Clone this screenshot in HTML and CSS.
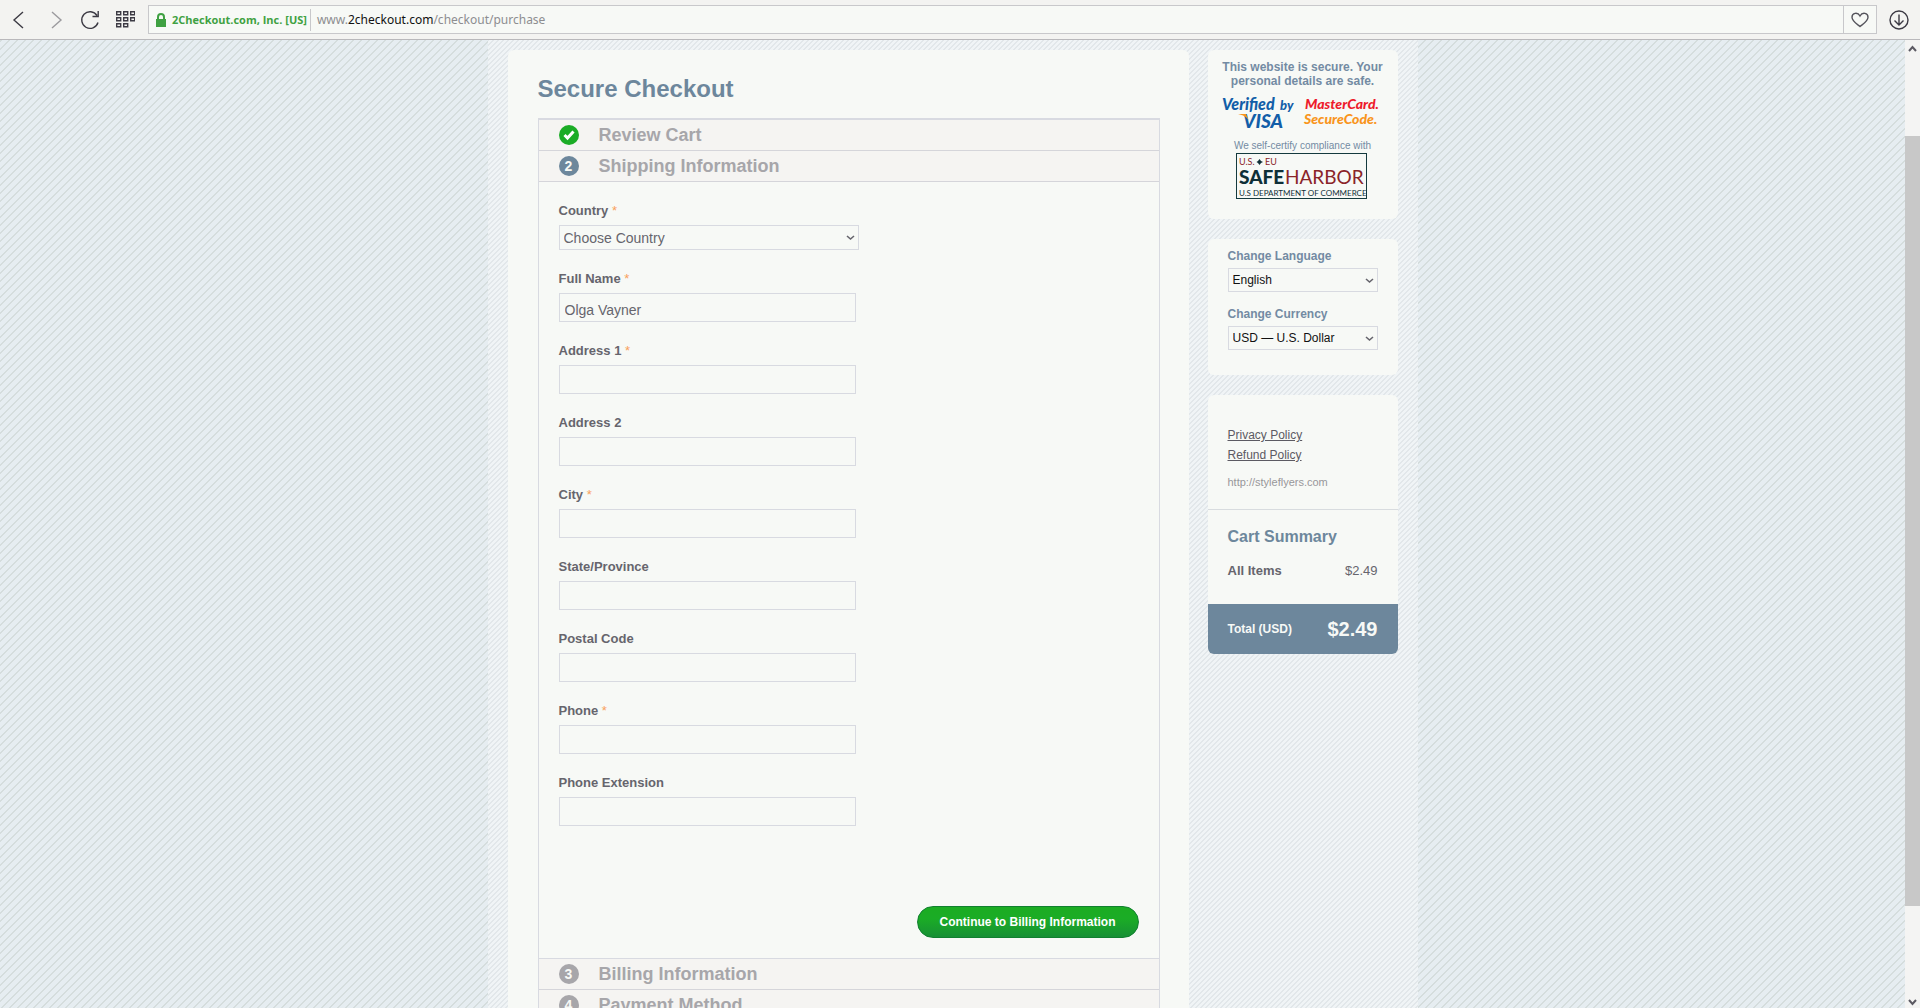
FILE: index.html
```html
<!DOCTYPE html>
<html lang="en">
<head>
  <meta charset="UTF-8" />
  <meta name="viewport" content="width=device-width, initial-scale=1.0" />
  <title>Secure Checkout</title>
  <link rel="stylesheet" href="styles.css">
</head>
<body>
  <header class="browser-bar">
    <button type="button" class="nav-btn" aria-label="Back">
      <svg width="20" height="24" viewBox="0 0 20 24"><path d="M13 4 L4 12 L13 20" /></svg>
    </button>
    <button type="button" class="nav-btn nav-off" aria-label="Forward">
      <svg width="20" height="24" viewBox="0 0 20 24"><path d="M7 4 L16 12 L7 20" /></svg>
    </button>
    <button type="button" class="nav-btn" aria-label="Reload">
      <svg width="20" height="24" viewBox="0 0 20 24"><path d="M17 7.500A8.300 8.300 0 1 0 18 14.500M18.200 3V8.500H12.500" /></svg>
    </button>
    <button type="button" class="nav-btn" aria-label="Speed dial">
      <svg width="20" height="24" viewBox="0 0 20 24"><path d="M1.700 3.700h4v3h-4zM8.700 3.700h4v3h-4zM15.700 3.700h4v3h-4zM1.700 9.700h4v3h-4zM8.700 9.700h4v3h-4zM15.700 9.700h4v3h-4zM1.700 15.700h4v3h-4zM8.700 15.700h4v3h-4z" /></svg>
    </button>
    <div class="address">
      <svg class="lock" width="10" height="14" viewBox="0 0 10 14"><path d="M0 6h10v8H0z" /><path class="shackle" d="M2 7V4a3 3 0 0 1 6 0v3" /></svg>
      <span class="cert">2Checkout.com, Inc. [US]</span>
      <span class="url">www.<b>2checkout.com</b>/checkout/purchase</span>
      <button type="button" class="heart" aria-label="Bookmark">
        <svg width="18" height="16" viewBox="0 0 18 16"><path d="M9 14.500C6 12 1 9 1 5.200C1 1 6.500-.5 9 4C11.500-.5 17 1 17 5.200C17 9 12 12 9 14.500z" /></svg>
      </button>
    </div>
    <button type="button" class="nav-btn" aria-label="Downloads">
      <svg width="20" height="20" viewBox="0 0 20 20"><circle cx="10" cy="10" r="9" /><path d="M10 4.500V15M5.500 10.500L10 15L14.500 10.500" /></svg>
    </button>
  </header>

  <div class="viewport">
    <div class="page">
      <div class="wrapper">
        <main class="panel checkout">
          <h1>Secure Checkout</h1>
          <div class="steps">
            <h2 class="step">
              <span class="num done"><svg width="14" height="12" viewBox="0 0 14 12"><path d="M2.500 6L5.500 9L11.500 2.500" /></svg></span>
              Review Cart
            </h2>
            <h2 class="step"><span class="num active">2</span>Shipping Information</h2>
            <form class="shipping">
              <div class="field">
                <label for="country">Country <span class="req">*</span></label>
                <div class="select wide">
                  <select id="country"><option>Choose Country</option></select>
                  <svg width="9" height="6" viewBox="0 0 9 6"><path d="M1 1L4.500 4L8 1" /></svg>
                </div>
              </div>
              <div class="field">
                <label for="name">Full Name <span class="req">*</span></label>
                <input type="text" id="name" value="Olga Vayner" />
              </div>
              <div class="field">
                <label for="address1">Address 1 <span class="req">*</span></label>
                <input type="text" id="address1" />
              </div>
              <div class="field">
                <label for="address2">Address 2</label>
                <input type="text" id="address2" />
              </div>
              <div class="field">
                <label for="city">City <span class="req">*</span></label>
                <input type="text" id="city" />
              </div>
              <div class="field">
                <label for="state">State/Province</label>
                <input type="text" id="state" />
              </div>
              <div class="field">
                <label for="postal">Postal Code</label>
                <input type="text" id="postal" />
              </div>
              <div class="field">
                <label for="phone">Phone <span class="req">*</span></label>
                <input type="text" id="phone" />
              </div>
              <div class="field">
                <label for="ext">Phone Extension</label>
                <input type="text" id="ext" />
              </div>
              <button type="submit" class="continue">Continue to Billing Information</button>
            </form>
            <h2 class="step"><span class="num">3</span>Billing Information</h2>
            <h2 class="step"><span class="num">4</span>Payment Method</h2>
          </div>
        </main>

        <aside class="sidebar">
          <section class="panel secure">
            <p class="safe">This website is secure. Your personal details are safe.</p>
            <svg class="logos" width="166" height="36" viewBox="0 0 166 36">
              <g class="visa">
                <text x="0" y="13" font-size="16">Verified</text>
                <text x="58" y="13" font-size="13">by</text>
                <text x="21" y="31" font-size="19">VISA</text>
              </g>
              <path class="flick" d="M16 17h8l3 7c-2-4-6-6-11-7z" />
              <text class="mc" x="83" y="12" font-size="14">MasterCard.</text>
              <text class="sc" x="82" y="27" font-size="14">SecureCode.</text>
            </svg>
            <p class="certify">We self-certify compliance with</p>
            <svg class="harbor" width="131" height="46" viewBox="0 0 131 46">
              <rect x=".5" y=".5" width="130" height="45" />
              <text class="red" x="3" y="12" font-size="9">U.S.</text>
              <path class="dark" d="M23.500 6L25 8L27 9L25 10L23.500 12L22 10L20.500 9L22 8z" />
              <text class="red" x="29" y="12" font-size="9">EU</text>
              <text class="dark bold" x="3" y="31" font-size="19">SAFE</text>
              <text class="red" x="49" y="31" font-size="19">HARBOR</text>
              <text class="dark" x="3" y="43" font-size="8">U.S DEPARTMENT OF COMMERCE</text>
            </svg>
          </section>

          <section class="panel prefs">
            <label for="language">Change Language</label>
            <div class="select">
              <select id="language"><option>English</option></select>
              <svg width="9" height="6" viewBox="0 0 9 6"><path d="M1 1L4.500 4L8 1" /></svg>
            </div>
            <label for="currency">Change Currency</label>
            <div class="select">
              <select id="currency"><option>USD — U.S. Dollar</option></select>
              <svg width="9" height="6" viewBox="0 0 9 6"><path d="M1 1L4.500 4L8 1" /></svg>
            </div>
          </section>

          <section class="panel cart">
            <div class="policies">
              <a href="#">Privacy Policy</a>
              <a href="#">Refund Policy</a>
              <p>http://styleflyers.com</p>
            </div>
            <div class="summary">
              <h3>Cart Summary</h3>
              <div class="line"><b>All Items</b><span>$2.49</span></div>
            </div>
            <div class="total"><span>Total (USD)</span><strong>$2.49</strong></div>
          </section>
        </aside>
      </div>
    </div>

    <div class="scrollbar">
      <svg width="9" height="8" viewBox="0 0 9 8"><path d="M1 6L4.500 2L8 6" /></svg>
      <div class="track"><div class="thumb"></div></div>
      <svg width="9" height="8" viewBox="0 0 9 8"><path d="M1 2L4.500 6L8 2" /></svg>
    </div>
  </div>
</body>
</html>
```
FILE: styles.css
```css
* { box-sizing: border-box; }
body {
  margin: 0;
  height: 100vh;
  display: flex;
  flex-direction: column;
  overflow: hidden;
  font-family: "Liberation Sans", Arial, sans-serif;
  font-size: 13px;
  color: #66656d;
}
h1, h2, h3, p { margin: 0; }
button, input, select { font-family: inherit; }
svg { display: block; }

/* browser bar */
.browser-bar {
  flex: none;
  height: 40px;
  padding: 0 11px 0 10px;
  display: flex;
  align-items: center;
  gap: 15px;
  background: #f3f3f1;
  border-bottom: 1px solid #b9b8bb;
}
.nav-btn {
  padding: 0;
  border: 0;
  background: none;
}
.nav-btn svg {
  fill: none;
  stroke: #3c3a44;
  stroke-width: 1.4;
}
.nav-off svg { stroke: #9b9a9e; }
.address {
  flex: 1;
  height: 29px;
  margin: 0 -3px 0 -2px;
  padding-left: 7px;
  display: flex;
  align-items: center;
  background: #f7f9f6;
  border: 1px solid #c8c8cb;
  font-family: "Noto Sans", sans-serif;
  font-size: 12px;
}
.lock { fill: #3fa142; margin-right: 6px; }
.lock .shackle { fill: none; stroke: #3fa142; stroke-width: 2; }
.cert {
  padding-right: 3px;
  border-right: 1px solid #c8c8cb;
  font-family: "Open Sans", sans-serif;
  font-size: 11px;
  font-weight: bold;
  line-height: 22px;
  color: #3fa142;
}
.url { flex: 1; padding-left: 6px; color: #8d8d90; }
.url b { font-weight: normal; color: #111; }
.heart {
  align-self: stretch;
  width: 33px;
  padding: 0 0 0 7px;
  border: 0;
  border-left: 1px solid #c8c8cb;
  background: #f7f9f6;
}
.heart svg { fill: none; stroke: #55545c; stroke-width: 1.4; }

/* page background */
.viewport { flex: 1; min-height: 0; display: flex; }
.page {
  flex: 1;
  overflow: hidden;
  background: linear-gradient(135deg, #d5dddd 0 14%, #e6edf1 14% 50%, #d5dddd 50% 64%, #e6edf1 64%);
  background-size: 8px 8px;
}
.wrapper {
  width: 930px;
  min-height: 100%;
  margin: 0 auto;
  padding: 10px 20px 0;
  display: flex;
  align-items: flex-start;
  gap: 19px;
  background: linear-gradient(135deg, #e2e7ea 0 12%, #f0f4f6 12% 50%, #e2e7ea 50% 62%, #f0f4f6 62%);
  background-size: 5px 5px;
}
.panel { background: #f7f9f6; border-radius: 6px; }

/* checkout */
.checkout { flex: 1; padding: 24px 29px 0 30px; }
h1 {
  margin-bottom: 15px;
  font-size: 24px;
  line-height: 29px;
  color: #6d879c;
}
.steps { border: 1px solid #d8dae1; border-top-width: 2px; }
.step {
  height: 31px;
  padding-left: 20px;
  display: flex;
  align-items: center;
  gap: 20px;
  background: #f5f4f2;
  border-bottom: 1px solid #d5d5da;
  font-size: 18px;
  color: #a7a6aa;
}
.num {
  width: 20px;
  height: 20px;
  display: flex;
  align-items: center;
  justify-content: center;
  border-radius: 50%;
  background: #a7a6aa;
  font-size: 14px;
  color: #f7f9f6;
}
.num.done { background: #1bac26; }
.num.active { background: #6d879c; }
.num svg { fill: none; stroke: #fff; stroke-width: 3; }
.shipping {
  padding: 21px 20px 20px;
  display: flex;
  flex-direction: column;
  gap: 21px;
  border-bottom: 1px solid #d8dae1;
}
.field label {
  display: block;
  margin-bottom: 6px;
  font-weight: bold;
  line-height: 16px;
}
.req { color: #f9a05c; font-weight: normal; }
.field input {
  display: block;
  width: 297px;
  height: 29px;
  padding: 5px 5px 0;
  background: #f7f9f6;
  border: 1px solid #d8dae1;
  font-size: 14px;
  color: #66656d;
}
.select { position: relative; }
.select.wide { width: 300px; }
.select select {
  display: block;
  width: 100%;
  height: 24px;
  padding: 0 4px;
  appearance: none;
  background: #f7f9f6;
  border: 1px solid #d8dae1;
  border-radius: 0;
  font-size: 12px;
  color: #111;
}
.select.wide select { height: 25px; font-size: 14px; color: #66656d; }
.select svg {
  position: absolute;
  right: 4px;
  top: 10px;
  fill: none;
  stroke: #66656d;
  stroke-width: 1.6;
  pointer-events: none;
}
.continue {
  align-self: flex-end;
  height: 32px;
  margin-top: 59px;
  padding: 0 22px;
  border: 1px solid #118030;
  border-radius: 16px;
  background: linear-gradient(#1bac22, #1bac26 40%, #179035);
  font-size: 12px;
  font-weight: bold;
  color: #fff;
}

/* sidebar */
.sidebar {
  width: 190px;
  display: flex;
  flex-direction: column;
  gap: 20px;
}
.secure { height: 169px; padding-top: 10px; text-align: center; }
.safe {
  padding: 0 10px;
  font-size: 12px;
  font-weight: bold;
  line-height: 14px;
  color: #738ba3;
}
.logos {
  margin: 9px 0 0 14px;
  font-family: Lato, sans-serif;
  font-weight: 900;
  font-style: italic;
}
.visa { fill: #125ea8; }
.flick, .sc { fill: #f9951c; }
.mc { fill: #ee1c2c; }
.certify { margin-top: 7px; font-size: 10px; line-height: 12px; color: #738ba3; }
.harbor { margin: 1px auto 0 28px; font-family: Lato, sans-serif; }
.harbor rect { fill: none; stroke: #143a3e; }
.harbor .red { fill: #8a2529; }
.harbor .dark { fill: #0f3038; }
.harbor .bold { font-weight: 900; }
.prefs { padding: 10px 20px 25px; }
.prefs label {
  display: block;
  margin-bottom: 4px;
  font-size: 12px;
  font-weight: bold;
  line-height: 15px;
  color: #738ba3;
}
.prefs .select { margin-bottom: 15px; }
.prefs .select:last-child { margin-bottom: 0; }
.cart { overflow: hidden; }
.policies {
  height: 115px;
  padding: 30px 20px 0;
  border-bottom: 1px solid #d8dcdf;
}
.policies a {
  display: block;
  font-size: 12px;
  line-height: 20px;
  color: #5c5a63;
}
.policies p { margin-top: 11px; font-size: 11px; line-height: 13px; color: #97979a; }
.summary { height: 94px; padding: 17px 20px 0; }
.summary h3 { font-size: 16px; line-height: 20px; color: #6d879c; }
.line { margin-top: 16px; display: flex; justify-content: space-between; line-height: 16px; }
.total {
  height: 50px;
  padding: 0 20px;
  display: flex;
  align-items: center;
  justify-content: space-between;
  background: #6d879c;
  font-size: 12px;
  font-weight: bold;
  color: #f7f9f6;
}
.total strong { font-size: 20px; }

/* scrollbar */
.scrollbar {
  width: 15px;
  padding: 5px 0 2px;
  display: flex;
  flex-direction: column;
  align-items: center;
  background: #f4f4f3;
}
.scrollbar svg { fill: none; stroke: #5c5a63; stroke-width: 2; }
.track { flex: 1; width: 100%; padding-top: 83px; }
.thumb { height: 89.3%; background: #c8c8c8; }
```
